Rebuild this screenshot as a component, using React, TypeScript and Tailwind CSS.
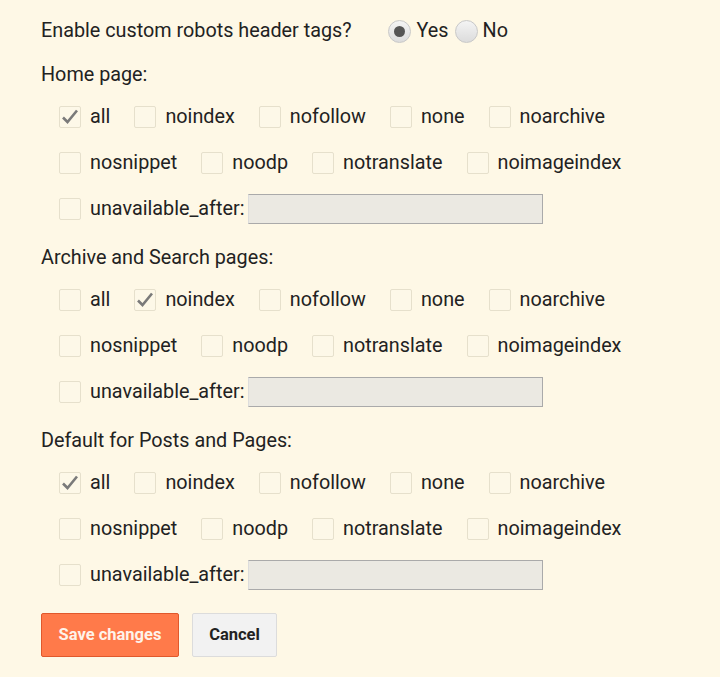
import { useState } from "react";

type Group = { title: string; checked: string[] };

const row1 = ["all", "noindex", "nofollow", "none", "noarchive"];
const row2 = ["nosnippet", "noodp", "notranslate", "noimageindex"];

const groups: Group[] = [
  { title: "Home page:", checked: ["all"] },
  { title: "Archive and Search pages:", checked: ["noindex"] },
  { title: "Default for Posts and Pages:", checked: ["all"] },
];

const Check = ({ on }: { on: boolean }) => (
  <span className="flex h-[22px] w-[22px] shrink-0 items-center justify-center rounded-[2px] border border-[#e6e0cc] bg-[#fdf8e8]">
    {on && (
      <svg width="18" height="16" viewBox="0 0 18 16">
        <path d="M2 8.5 L6.5 13 L16 1.5" fill="none" stroke="#7a7a7a" strokeWidth="2.6" />
      </svg>
    )}
  </span>
);

const Item = ({ label, on }: { label: string; on: boolean }) => (
  <label className="flex items-center gap-[9px]">
    <Check on={on} />
    <span>{label}</span>
  </label>
);

const Radio = ({ on }: { on: boolean }) => (
  <span className="flex h-[23px] w-[23px] items-center justify-center rounded-full border border-[#c8c8c8] bg-gradient-to-b from-[#f4f4f4] to-[#dcdcdc]">
    {on && <span className="h-[11px] w-[11px] rounded-full bg-[#555]" />}
  </span>
);

export default function App() {
  const [yes] = useState(true);
  return (
    <div
      className="min-h-[677px] bg-[#fef8e6] px-[41px] pt-[19px] text-[19.8px] text-[#222]"
      style={{ fontFamily: "Roboto, 'Liberation Sans', sans-serif" }}
    >
      <div className="flex h-[24px] items-center">
        <span>Enable custom robots header tags?</span>
        <span className="ml-[36px] flex items-center gap-[6px]">
          <Radio on={yes} />
          <span>Yes</span>
        </span>
        <span className="ml-[6px] flex items-center gap-[5px]">
          <Radio on={!yes} />
          <span>No</span>
        </span>
      </div>

      {groups.map((g, i) => (
        <div key={g.title} className={i === 0 ? "mt-[20px]" : "mt-[25px]"}>
          <div className="flex h-[24px] items-center">{g.title}</div>
          <div className="ml-[18px] mt-[18px] flex flex-col gap-[22px]">
            <div className="flex h-[24px] items-center gap-x-[24px]">
              {row1.map((l) => (
                <Item key={l} label={l} on={g.checked.includes(l)} />
              ))}
            </div>
            <div className="flex h-[24px] items-center gap-x-[24px]">
              {row2.map((l) => (
                <Item key={l} label={l} on={g.checked.includes(l)} />
              ))}
            </div>
            <div className="flex h-[24px] items-center">
              <Item label="unavailable_after:" on={false} />
              <input
                className="ml-[4px] h-[30px] w-[295px] border border-[#aaa] border-l-[#ddd] bg-[#ebe9e2] outline-none"
                type="text"
              />
            </div>
          </div>
        </div>
      ))}

      <div className="mt-[26px] flex gap-[13px] text-[16.5px] font-bold">
        <button className="h-[44px] w-[138px] rounded-[2px] border border-[#e0582c] bg-[#ff7a4a] text-[#fef3ea]">
          Save changes
        </button>
        <button className="h-[44px] w-[85px] rounded-[2px] border border-[#dcdcdc] bg-[#f2f2f2] text-[#222]">
          Cancel
        </button>
      </div>
    </div>
  );
}
